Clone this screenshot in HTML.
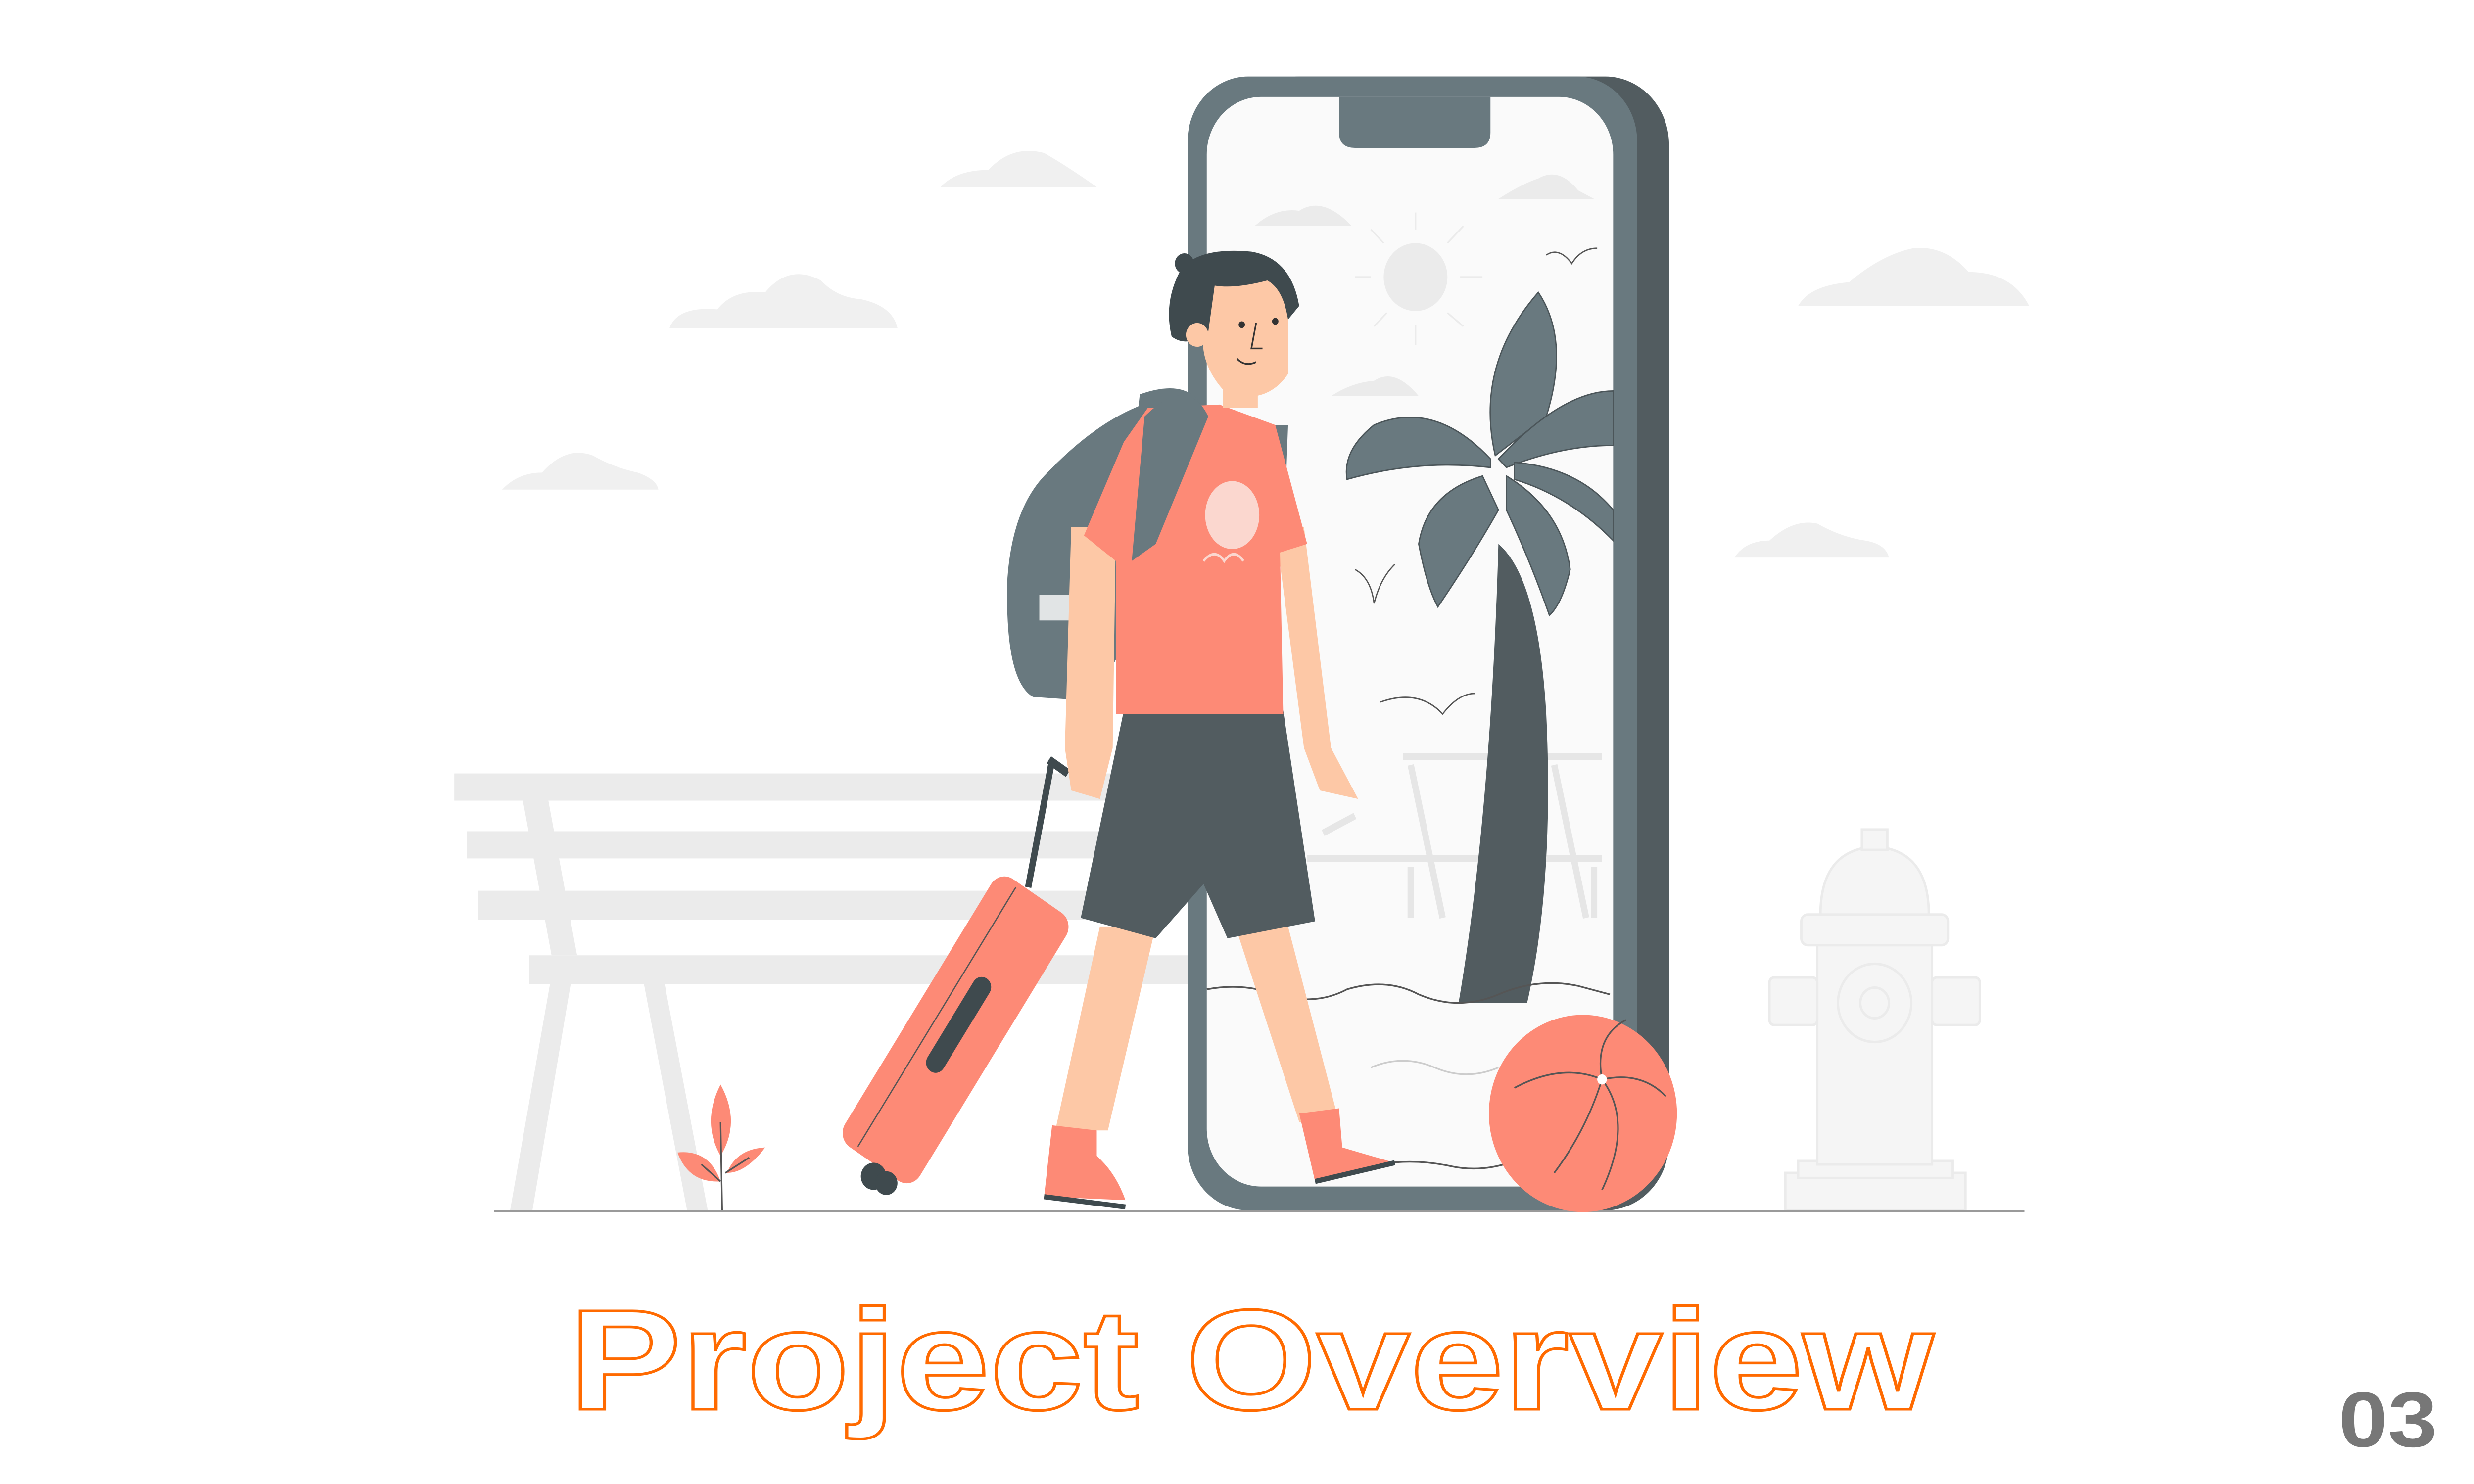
<!DOCTYPE html>
<html><head><meta charset="utf-8"><style>
html,body{margin:0;padding:0;background:#fff;overflow:hidden;width:100%;height:100%;}
svg{display:block;position:fixed;left:0;top:0;width:100vw;height:100vh;}
</style></head><body>
<svg viewBox="0 0 1552 873" preserveAspectRatio="none" xmlns="http://www.w3.org/2000/svg">
<rect width="1552" height="873" fill="#fff"/>
<g fill="#f0f0f0">
<path d="M420 193 Q425 180 450 182 Q460 170 480 172 Q495 155 515 165 Q525 175 540 176 Q560 180 563 193 Z"/>
<path d="M590 110 Q600 100 620 100 Q635 85 655 90 Q670 98 688 110 Z"/>
<path d="M315 288 Q325 278 340 278 Q355 262 372 268 Q385 275 400 278 Q412 282 413 288 Z"/>
<path d="M1128 180 Q1135 168 1160 166 Q1180 150 1200 146 Q1220 144 1235 160 Q1262 160 1273 180 Z"/>
<path d="M1088 328 Q1095 318 1110 318 Q1125 305 1140 308 Q1155 316 1170 318 Q1183 320 1185 328 Z"/>
</g>
<g fill="#ebebeb">
<rect x="285" y="455" width="420" height="16"/>
<rect x="293" y="489" width="400" height="16"/>
<rect x="300" y="524" width="395" height="17"/>
<rect x="332" y="562" width="413" height="17"/>
<polygon points="328,471 344,471 362,562 346,562"/>
<polygon points="345,579 358,579 334,712 320,712"/>
<polygon points="404,579 417,579 444,712 431,712"/>
</g>
<g fill="#f5f5f5" stroke="#ebebeb" stroke-width="1.5">
<rect x="1120" y="690" width="113" height="22"/>
<rect x="1128" y="683" width="97" height="10"/>
<rect x="1140" y="555" width="72" height="130"/>
<rect x="1110" y="575" width="30" height="28" rx="3"/>
<rect x="1212" y="575" width="30" height="28" rx="3"/>
<rect x="1130" y="538" width="92" height="18" rx="4"/>
<path d="M1142 538 Q1142 500 1176 498 Q1210 500 1210 538 Z"/>
<rect x="1168" y="488" width="16" height="12"/>
<circle cx="1176" cy="590" r="23"/>
<circle cx="1176" cy="590" r="9"/>
</g>
<line x1="310" y1="712.5" x2="1270" y2="712.5" stroke="#9a9a9a" stroke-width="1"/>
<g fill="#fd8a76">
<path d="M452 638 Q465 660 452 680 Q440 660 452 638 Z"/>
<path d="M425 678 Q445 676 452 695 Q432 696 425 678 Z"/>
<path d="M480 675 Q468 690 456 690 Q462 676 480 675 Z"/>
</g>
<path d="M452 660 L453 712 M452 695 L440 685 M455 690 L470 681" stroke="#555" stroke-width="1" fill="none"/>
<rect x="775" y="45" width="272" height="667" rx="40" fill="#525c60"/>
<rect x="745" y="45" width="282" height="667" rx="38" fill="#69797f"/>
<rect x="757" y="57" width="255" height="641" rx="34" fill="#fafafa"/>
<path d="M840 57 L935 57 L935 78 Q935 87 925 87 L850 87 Q840 87 840 78 Z" fill="#69797f"/>
<g fill="#ebebeb">
<path d="M787 133 Q800 122 815 124 Q830 115 848 133 Z"/>
<path d="M940 117 Q955 108 965 105 Q978 98 990 112 L1000 117 Z"/>
<path d="M835 233 Q848 225 862 224 Q875 216 890 233 Z"/>
<circle cx="888" cy="163" r="20"/>
</g>
<g stroke="#ebebeb" stroke-width="1">
<line x1="888" y1="125" x2="888" y2="135"/><line x1="888" y1="191" x2="888" y2="203"/>
<line x1="850" y1="163" x2="860" y2="163"/><line x1="916" y1="163" x2="930" y2="163"/>
<line x1="860" y1="135" x2="868" y2="143"/><line x1="908" y1="143" x2="918" y2="133"/>
<line x1="862" y1="192" x2="870" y2="184"/><line x1="908" y1="184" x2="918" y2="192"/>
</g>
<g fill="none" stroke="#e6e6e6" stroke-width="4">
<path d="M880 445 L1005 445 M885 450 L905 540 M975 450 L995 540 M820 505 L1005 505 M830 490 L850 480 M885 510 L885 540 M1000 510 L1000 540"/>
</g>
<path d="M970 150 Q978 145 986 155 Q992 146 1002 146" fill="none" stroke="#555" stroke-width="0.8"/>
<path d="M850 335 Q860 340 862 355 Q866 340 875 332" fill="none" stroke="#555" stroke-width="0.8"/>
<path d="M866 413 Q890 405 905 420 Q915 408 925 408" fill="none" stroke="#555" stroke-width="0.8"/>
<path d="M940 320 Q965 340 970 420 Q975 520 958 590 L915 590 Q935 480 940 320 Z" fill="#525c60"/>
<g fill="#69797f" stroke="#4b5559" stroke-width="0.8">
<path d="M938 268 Q925 215 965 172 Q985 200 970 245 Z"/>
<path d="M935 270 Q900 235 862 250 Q842 265 845 282 Q890 270 935 275 Z"/>
<path d="M940 270 Q980 230 1012 230 L1012 262 Q980 262 945 275 Z"/>
<path d="M930 280 Q895 290 890 320 Q895 345 902 357 Q925 325 940 300 Z"/>
<path d="M945 280 Q980 300 985 335 Q980 355 972 362 Q960 330 945 300 Z"/>
<path d="M950 272 Q990 275 1012 300 L1012 318 Q985 292 950 282 Z"/>
</g>
<path d="M757 582 Q780 578 800 585 Q825 592 845 582 Q870 575 890 585 Q915 595 940 585 Q965 575 990 580 L1010 585" fill="none" stroke="#555" stroke-width="1"/>
<path d="M860 628 Q880 620 900 628 Q920 636 940 628" fill="none" stroke="#ccc" stroke-width="1"/>
<path d="M850 688 Q880 680 910 686 Q930 690 950 683" fill="none" stroke="#555" stroke-width="1"/>
<ellipse cx="993" cy="655" rx="59" ry="58" fill="#fd8a76"/>
<g fill="none" stroke="#555" stroke-width="1">
<path d="M950 640 Q980 625 1005 635 M1005 635 Q1030 630 1045 645 M1005 635 Q995 665 975 690 M1005 635 Q1025 660 1005 700 M1005 635 Q1000 610 1020 600"/>
</g>
<circle cx="1005" cy="635" r="3" fill="#fff"/>
<line x1="660" y1="447" x2="645" y2="522" stroke="#3f4a4e" stroke-width="4"/>
<line x1="658" y1="447" x2="670" y2="455" stroke="#3f4a4e" stroke-width="5"/>
<g transform="rotate(33 600 605)">
<rect x="572" y="512" width="56" height="188" rx="10" fill="#fd8a76"/>
<rect x="594" y="570" width="12" height="65" rx="6" fill="#3f4a4e"/>
<line x1="586" y1="515" x2="586" y2="697" stroke="#555" stroke-width="0.8"/>
</g>
<circle cx="548" cy="692" r="8" fill="#3f4a4e"/>
<circle cx="556" cy="696" r="7" fill="#3f4a4e"/>
<path d="M655 280 Q700 235 745 232 L750 260 L720 340 Q700 400 680 412 L648 410 Q630 400 632 340 Q635 300 655 280 Z" fill="#69797f"/>
<path d="M715 232 Q745 222 755 240 L720 315 L705 320 Z" fill="#69797f"/>
<rect x="652" y="350" width="22" height="15" fill="#fff" opacity="0.8"/>
<path d="M800 250 L808 250 L805 330 L798 330 Z" fill="#69797f"/>
<path d="M690 545 L725 545 L695 665 L662 665 Z" fill="#fdc8a6"/>
<path d="M775 545 L808 545 L840 660 L815 660 Z" fill="#fdc8a6"/>
<path d="M705 418 L805 418 L825 542 L770 552 L755 520 L725 552 L678 540 Z" fill="#525c60"/>
<path d="M672 310 L700 310 L698 440 L690 470 L672 465 L668 440 Z" fill="#fdc8a6"/>
<path d="M800 310 L818 310 L835 440 L852 470 L828 465 L818 440 Z" fill="#fdc8a6"/>
<path d="M720 240 L765 238 L800 250 L820 320 L803 325 L805 420 L700 420 L700 330 L680 315 L705 260 Z" fill="#fd8a76"/>
<path d="M718 245 Q745 220 758 245 L725 320 L710 330 Z" fill="#69797f"/>
<ellipse cx="773" cy="303" rx="17" ry="20" fill="#fbd7cf"/>
<path d="M755 330 Q762 322 768 330 Q774 322 780 330" fill="none" stroke="#fbd7cf" stroke-width="1.5"/>
<rect x="767" y="215" width="22" height="25" fill="#fdc8a6"/>
<path d="M758 165 Q785 155 808 170 L808 220 Q795 238 770 232 Q752 215 755 195 Z" fill="#fdc8a6"/>
<path d="M740 160 Q750 145 785 148 Q810 152 815 180 L808 188 Q805 170 795 165 Q775 170 762 168 L758 195 Q745 205 735 198 Q730 178 740 160 Z" fill="#3f4a4e"/>
<circle cx="743" cy="155" r="6" fill="#3f4a4e"/>
<circle cx="751" cy="197" r="7" fill="#fdc8a6"/>
<circle cx="779" cy="191" r="2" fill="#333"/><circle cx="800" cy="189" r="2" fill="#333"/>
<path d="M788 190 L785 205 L792 205 M776 211 Q781 216 788 213" fill="none" stroke="#333" stroke-width="1"/>
<path d="M660 662 L688 665 L688 680 Q700 690 706 706 L655 704 Z" fill="#fd8a76"/>
<path d="M655 704 L706 710" stroke="#3f4a4e" stroke-width="3"/>
<path d="M815 655 L840 652 L842 675 Q860 680 875 684 L825 695 Z" fill="#fd8a76"/>
<path d="M825 695 L875 684" stroke="#3f4a4e" stroke-width="3"/>
<text x="357" y="829" font-family="Liberation Sans, sans-serif" font-weight="bold" font-size="84" fill="#fff" stroke="#ff6a00" stroke-width="1.6" textLength="856" lengthAdjust="spacingAndGlyphs">Project Overview</text>
<text x="1467" y="851" font-family="Liberation Sans, sans-serif" font-weight="bold" font-size="46" fill="#777" textLength="62" lengthAdjust="spacingAndGlyphs">03</text>
</svg>
</body></html>
